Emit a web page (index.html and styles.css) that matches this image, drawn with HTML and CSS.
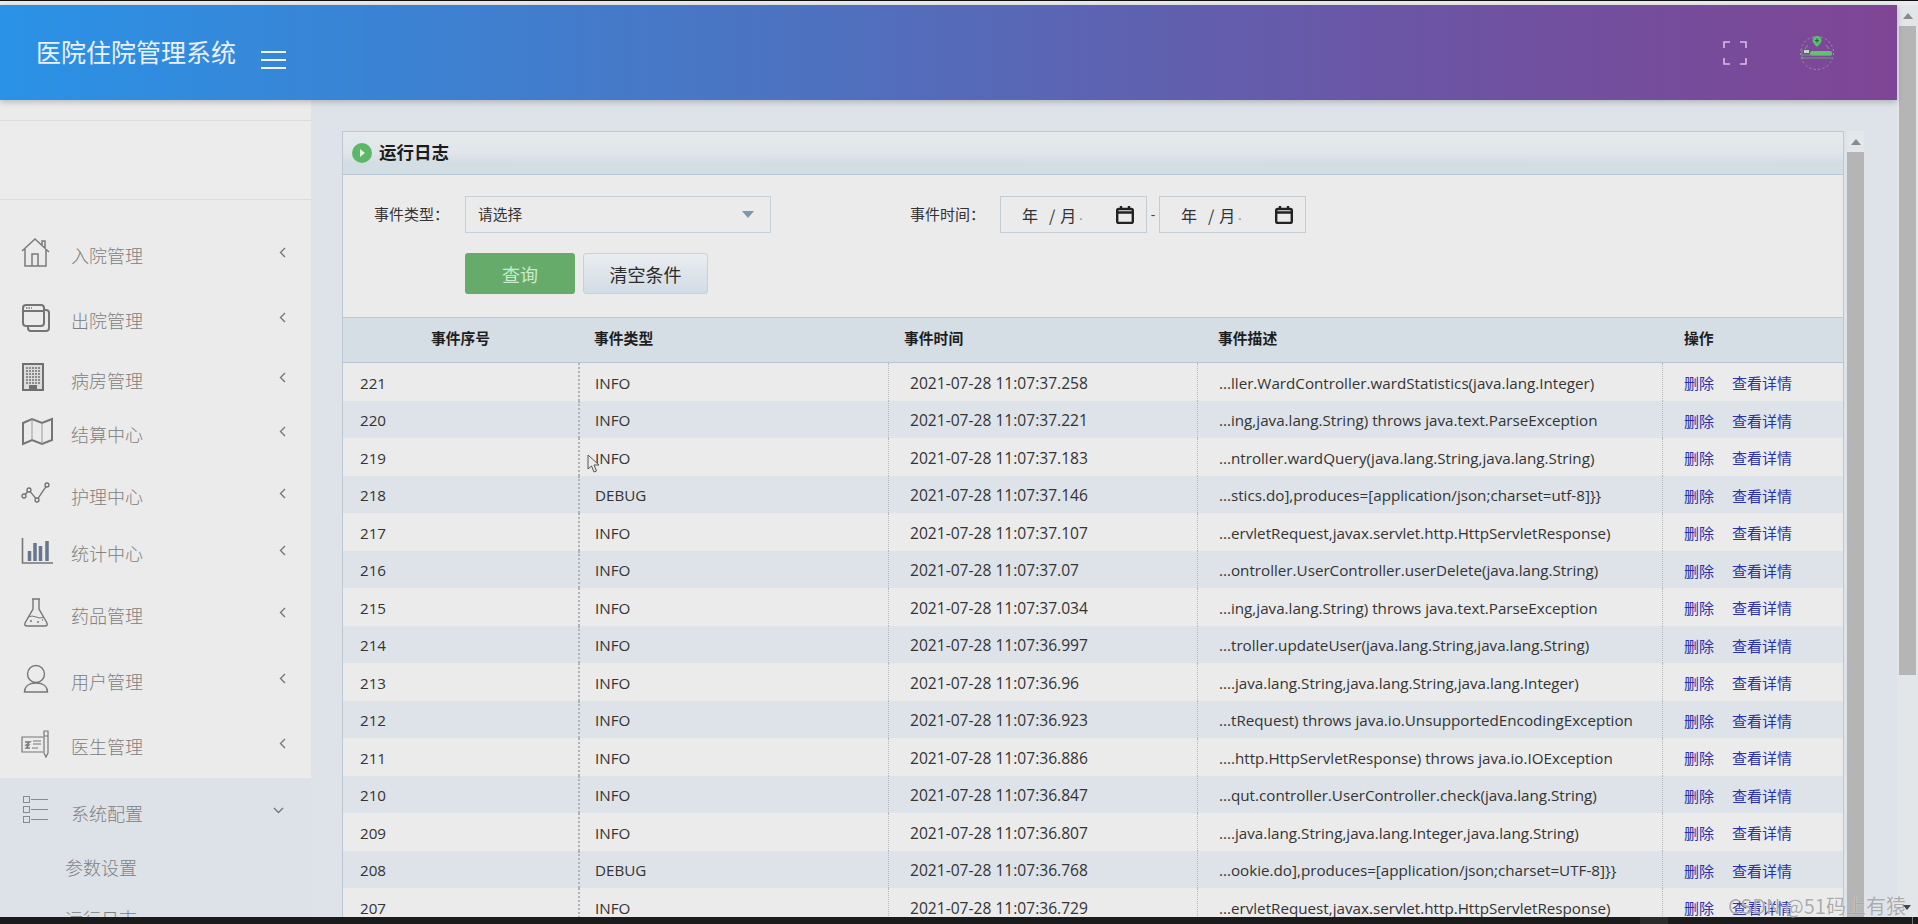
FILE: index.html
```html
<!DOCTYPE html>
<html lang="zh-CN">
<head>
<meta charset="utf-8">
<title>医院住院管理系统</title>
<link rel="stylesheet" href="styles.css">
</head>
<body>
<div class="app">
  <div class="top-strip"></div>
  <div class="window">
    <div class="page">
      <header class="header">
        <h1 class="brand">医院住院管理系统</h1>
        <div class="hamburger"><span></span><span></span><span></span></div>
        <div class="header-right">
          <svg class="fullscreen" width="24" height="24" viewBox="0 0 24 24" fill="none" stroke="#d2bfe6" stroke-width="1.600"><path d="M1 7V1h6M17 1h6v6M23 17v6h-6M7 23H1v-6"/></svg>
          <svg class="logo" width="36" height="38" viewBox="0 0 36 38" fill="none">
            <circle cx="18" cy="19" r="16.500" stroke="#9a9cb4" stroke-width=".9" stroke-dasharray="2 2.500"/>
            <path d="M18 2c-3 0-4.500 2-4.500 4.500C13.500 9 18 13 18 13s4.500-4 4.500-6.500C22.500 4 21 2 18 2z" fill="#58bd6c"/>
            <path d="M16 6.500h4M18 4.500v4" stroke="#27633a" stroke-width="1.200"/>
            <path d="M9 11q-2 2-3 4M27 11q2 2 3 4" stroke="#8fa79a" stroke-width=".8"/>
            <path d="M3 15v10M3 21h30M3 24h30" stroke="#6f9a86" stroke-width="1"/>
            <rect x="5" y="16" width="5" height="3" fill="#c6d6c8"/>
            <rect x="11" y="17" width="22" height="4.500" rx="2" fill="#63c070"/>
          </svg>
        </div>
      </header>
      <div class="main">
        <aside class="sidebar">
          <div class="side-top"></div>
          <nav class="side-nav">
            <div class="nav-item">
              <svg class="nav-icon" width="36" height="30" viewBox="0 0 36 30" fill="none" stroke="#7b7b7b" stroke-width="1.500"><path d="M4 14L17 2l14 13M24 8V4h3v8M7 12v17h21V12M14 29V17h6v12"/></svg>
              <span class="nav-text">入院管理</span>
              <svg class="chev" width="7" height="11" viewBox="0 0 7 11" fill="none" stroke="#777" stroke-width="1.400"><path d="M6 1L1.500 5.500 6 10"/></svg>
            </div>
            <div class="nav-item">
              <svg class="nav-icon" width="36" height="30" viewBox="0 0 36 30" fill="none" stroke="#757575" stroke-width="2"><rect x="5" y="3" width="21" height="21" rx="3"/><path d="M5 9h21M26 8h2a3 3 0 0 1 3 3v15a3 3 0 0 1-3 3H13a3 3 0 0 1-3-3v-2"/><path d="M8 6h6" stroke-width="1.500" stroke-dasharray="1.500 1"/></svg>
              <span class="nav-text">出院管理</span>
              <svg class="chev" width="7" height="11" viewBox="0 0 7 11" fill="none" stroke="#777" stroke-width="1.400"><path d="M6 1L1.500 5.500 6 10"/></svg>
            </div>
            <div class="nav-item">
              <svg class="nav-icon" width="36" height="30" viewBox="0 0 36 30" fill="none" stroke="#707070"><rect x="5" y="2" width="20" height="26" stroke-width="2" fill="#dcdcdc"/><path d="M8 6h14M8 9h14M8 12h14M8 15h14M8 18h14M8 21h14" stroke-width="1.600" stroke-dasharray="2 1"/><rect x="11" y="23" width="8" height="5" fill="#707070" stroke="none"/></svg>
              <span class="nav-text">病房管理</span>
              <svg class="chev" width="7" height="11" viewBox="0 0 7 11" fill="none" stroke="#777" stroke-width="1.400"><path d="M6 1L1.500 5.500 6 10"/></svg>
            </div>
            <div class="nav-item">
              <svg class="nav-icon" width="36" height="30" viewBox="0 0 36 30" fill="none" stroke="#757575" stroke-width="2"><path d="M5 7l9-4 10 4 10-4v21l-10 4-10-4-9 4z"/><path d="M14 3v21M24 7v21" stroke-width="1" stroke="#999"/></svg>
              <span class="nav-text">结算中心</span>
              <svg class="chev" width="7" height="11" viewBox="0 0 7 11" fill="none" stroke="#777" stroke-width="1.400"><path d="M6 1L1.500 5.500 6 10"/></svg>
            </div>
            <div class="nav-item">
              <svg class="nav-icon" width="36" height="30" viewBox="0 0 36 30" fill="none" stroke="#707070" stroke-width="1.300"><circle cx="6" cy="18" r="2"/><circle cx="11" cy="12" r="2"/><circle cx="19" cy="22" r="2"/><circle cx="29" cy="7" r="2"/><path d="M7.300 16.500l2.400-3M12.200 13.600l5.600 6.800M20 20.300L28 8.700"/></svg>
              <span class="nav-text">护理中心</span>
              <svg class="chev" width="7" height="11" viewBox="0 0 7 11" fill="none" stroke="#777" stroke-width="1.400"><path d="M6 1L1.500 5.500 6 10"/></svg>
            </div>
            <div class="nav-item">
              <svg class="nav-icon" width="36" height="30" viewBox="0 0 36 30" fill="none" stroke="#777" stroke-width="1.600"><path d="M4.500 3v25H35"/><path d="M11.500 16v10M17 8v18M22.500 11v15M29 6v20" stroke="#66768c" stroke-width="3.500"/></svg>
              <span class="nav-text">统计中心</span>
              <svg class="chev" width="7" height="11" viewBox="0 0 7 11" fill="none" stroke="#777" stroke-width="1.400"><path d="M6 1L1.500 5.500 6 10"/></svg>
            </div>
            <div class="nav-item">
              <svg class="nav-icon" width="36" height="30" viewBox="0 0 36 30" fill="none" stroke="#777" stroke-width="1.400"><path d="M14 2h8M15 2v10L7 26q-1 3 2 3h18q3 0 2-3L21 12V2"/><path d="M10 20q4-2 8 0t8 0" stroke-width="1"/><path d="M12 24h2M19 25h2M24 23h1" stroke-width="1.500"/></svg>
              <span class="nav-text">药品管理</span>
              <svg class="chev" width="7" height="11" viewBox="0 0 7 11" fill="none" stroke="#777" stroke-width="1.400"><path d="M6 1L1.500 5.500 6 10"/></svg>
            </div>
            <div class="nav-item">
              <svg class="nav-icon" width="36" height="30" viewBox="0 0 36 30" fill="none" stroke="#777" stroke-width="1.400"><circle cx="18" cy="11" r="8.500"/><path d="M6.500 29c0-6 5-9 11.500-9s11.500 3 11.500 9z"/></svg>
              <span class="nav-text">用户管理</span>
              <svg class="chev" width="7" height="11" viewBox="0 0 7 11" fill="none" stroke="#777" stroke-width="1.400"><path d="M6 1L1.500 5.500 6 10"/></svg>
            </div>
            <div class="nav-item">
              <svg class="nav-icon" width="36" height="30" viewBox="0 0 36 30" fill="none" stroke="#777" stroke-width="1.200"><path d="M25 9H4v15h21"/><path d="M15 13h8M15 16h8M14 20h6" stroke-width="1"/><path d="M7 14h5l-4 3h3l-3 3h4" stroke-width="1.300"/><path d="M26 3h4v22l-2 4-2-4zM26 8h4"/></svg>
              <span class="nav-text">医生管理</span>
              <svg class="chev" width="7" height="11" viewBox="0 0 7 11" fill="none" stroke="#777" stroke-width="1.400"><path d="M6 1L1.500 5.500 6 10"/></svg>
            </div>
            <div class="nav-group">
              <div class="nav-item">
                <svg class="nav-icon" width="36" height="30" viewBox="0 0 36 30" fill="none" stroke="#8a8a8a" stroke-width="1"><rect x="5.500" y="1.500" width="6" height="6"/><rect x="5.500" y="11.500" width="6" height="6"/><rect x="5.500" y="21.500" width="6" height="6"/><path d="M13 4.500h17M13 14.500h17M13 24.500h17"/></svg>
                <span class="nav-text">系统配置</span>
                <svg class="chev-open" width="11" height="7" viewBox="0 0 11 7" fill="none" stroke="#777" stroke-width="1.400"><path d="M1 1l4.500 4.500L10 1"/></svg>
              </div>
              <div class="sub-item">参数设置</div>
              <div class="sub-item">运行日志</div>
            </div>
          </nav>
        </aside>
        <main class="content">
          <section class="panel">
            <div class="panel-head">
              <svg class="panel-icon" width="20" height="20" viewBox="0 0 20 20"><circle cx="10" cy="10" r="10" fill="#5cb868"/><path d="M8 6l5 4-5 4z" fill="#e3f3e4"/></svg>
              <h2 class="panel-title">运行日志</h2>
            </div>
            <div class="form">
              <div class="form-row">
                <span class="label">事件类型：</span>
                <div class="select"><span>请选择</span><i class="caret"></i></div>
                <span class="label label-time">事件时间：</span>
                <div class="date">
                  <span class="date-year">年</span><span class="date-sep">/</span><span>月</span><span class="date-dot">.</span>
                  <svg class="cal" width="18" height="18" viewBox="0 0 18 18" fill="none" stroke="#222" stroke-width="2.400"><rect x="1.200" y="3" width="15.600" height="14" rx="1.500"/><path d="M1.200 6.500h15.600" stroke-width="2.500"/><path d="M5 0v3M13 0v3"/></svg>
                </div>
                <span class="date-dash">-</span>
                <div class="date">
                  <span class="date-year">年</span><span class="date-sep">/</span><span>月</span><span class="date-dot">.</span>
                  <svg class="cal" width="18" height="18" viewBox="0 0 18 18" fill="none" stroke="#222" stroke-width="2.400"><rect x="1.200" y="3" width="15.600" height="14" rx="1.500"/><path d="M1.200 6.500h15.600" stroke-width="2.500"/><path d="M5 0v3M13 0v3"/></svg>
                </div>
              </div>
              <div class="btn-row">
                <button class="btn btn-primary">查询</button>
                <button class="btn btn-clear">清空条件</button>
              </div>
            </div>
            <div class="log-table">
              <div class="log-row log-head">
                <div class="cell c-id">事件序号</div><div class="cell">事件类型</div><div class="cell">事件时间</div><div class="cell c-desc-h">事件描述</div><div class="cell c-op-h">操作</div>
              </div>
              <div class="log-row"><div class="cell">221</div><div class="cell">INFO</div><div class="cell">2021-07-28 11:07:37.258</div><div class="cell">...ller.WardController.wardStatistics(java.lang.Integer)</div><div class="cell"><a>删除</a><a>查看详情</a></div></div>
              <div class="log-row"><div class="cell">220</div><div class="cell">INFO</div><div class="cell">2021-07-28 11:07:37.221</div><div class="cell">...ing,java.lang.String) throws java.text.ParseException</div><div class="cell"><a>删除</a><a>查看详情</a></div></div>
              <div class="log-row"><div class="cell">219</div><div class="cell">INFO</div><div class="cell">2021-07-28 11:07:37.183</div><div class="cell">...ntroller.wardQuery(java.lang.String,java.lang.String)</div><div class="cell"><a>删除</a><a>查看详情</a></div></div>
              <div class="log-row"><div class="cell">218</div><div class="cell">DEBUG</div><div class="cell">2021-07-28 11:07:37.146</div><div class="cell">...stics.do],produces=[application/json;charset=utf-8]}}</div><div class="cell"><a>删除</a><a>查看详情</a></div></div>
              <div class="log-row"><div class="cell">217</div><div class="cell">INFO</div><div class="cell">2021-07-28 11:07:37.107</div><div class="cell">...ervletRequest,javax.servlet.http.HttpServletResponse)</div><div class="cell"><a>删除</a><a>查看详情</a></div></div>
              <div class="log-row"><div class="cell">216</div><div class="cell">INFO</div><div class="cell">2021-07-28 11:07:37.07</div><div class="cell">...ontroller.UserController.userDelete(java.lang.String)</div><div class="cell"><a>删除</a><a>查看详情</a></div></div>
              <div class="log-row"><div class="cell">215</div><div class="cell">INFO</div><div class="cell">2021-07-28 11:07:37.034</div><div class="cell">...ing,java.lang.String) throws java.text.ParseException</div><div class="cell"><a>删除</a><a>查看详情</a></div></div>
              <div class="log-row"><div class="cell">214</div><div class="cell">INFO</div><div class="cell">2021-07-28 11:07:36.997</div><div class="cell">...troller.updateUser(java.lang.String,java.lang.String)</div><div class="cell"><a>删除</a><a>查看详情</a></div></div>
              <div class="log-row"><div class="cell">213</div><div class="cell">INFO</div><div class="cell">2021-07-28 11:07:36.96</div><div class="cell">....java.lang.String,java.lang.String,java.lang.Integer)</div><div class="cell"><a>删除</a><a>查看详情</a></div></div>
              <div class="log-row"><div class="cell">212</div><div class="cell">INFO</div><div class="cell">2021-07-28 11:07:36.923</div><div class="cell">...tRequest) throws java.io.UnsupportedEncodingException</div><div class="cell"><a>删除</a><a>查看详情</a></div></div>
              <div class="log-row"><div class="cell">211</div><div class="cell">INFO</div><div class="cell">2021-07-28 11:07:36.886</div><div class="cell">....http.HttpServletResponse) throws java.io.IOException</div><div class="cell"><a>删除</a><a>查看详情</a></div></div>
              <div class="log-row"><div class="cell">210</div><div class="cell">INFO</div><div class="cell">2021-07-28 11:07:36.847</div><div class="cell">...qut.controller.UserController.check(java.lang.String)</div><div class="cell"><a>删除</a><a>查看详情</a></div></div>
              <div class="log-row"><div class="cell">209</div><div class="cell">INFO</div><div class="cell">2021-07-28 11:07:36.807</div><div class="cell">....java.lang.String,java.lang.Integer,java.lang.String)</div><div class="cell"><a>删除</a><a>查看详情</a></div></div>
              <div class="log-row"><div class="cell">208</div><div class="cell">DEBUG</div><div class="cell">2021-07-28 11:07:36.768</div><div class="cell">...ookie.do],produces=[application/json;charset=UTF-8]}}</div><div class="cell"><a>删除</a><a>查看详情</a></div></div>
              <div class="log-row"><div class="cell">207</div><div class="cell">INFO</div><div class="cell">2021-07-28 11:07:36.729</div><div class="cell">...ervletRequest,javax.servlet.http.HttpServletResponse)</div><div class="cell"><a>删除</a><a>查看详情</a></div></div>
            </div>
          </section>
          <div class="scroll scroll-inner"><i class="scroll-up"></i><div class="thumb thumb-inner"></div></div>
        </main>
      </div>
    </div>
    <div class="scroll scroll-outer"><i class="scroll-up"></i><div class="thumb thumb-outer"></div></div>
  </div>
  <div class="bottom-bar"><span class="bar-seg"></span><span class="bar-tick"></span></div>
</div>
<svg class="cursor" width="14" height="20" viewBox="0 0 14 20" fill="#ececec" stroke="#555" stroke-width="1"><path d="M1 1v14l3.500-3 2.500 6 2.500-1-2.500-6H12z"/></svg>
<div class="watermark">CSDN @51码上有猿</div>
<i class="wm-caret"></i>
</body>
</html>
```
FILE: styles.css
```css
* { box-sizing: border-box; }
html, body { margin: 0; padding: 0; height: 100%; overflow: hidden; }
body {
  font-family: "Open Sans", "Noto Sans CJK SC", sans-serif;
  color: #333;
  background: #e6e6e6;
}
.app { display: flex; flex-direction: column; width: 1918px; height: 924px; overflow: hidden; }
.top-strip { height: 5px; flex: none; background: #e9ebec; border-top: 1px solid #111; }
.window { display: flex; flex: 1; min-height: 0; }
.page { display: flex; flex-direction: column; width: 1897px; flex: none; min-height: 0; }

/* header */
.header {
  height: 95px; flex: none; display: flex; align-items: center;
  background: linear-gradient(90deg, #2a92e6 0%, #4b74c2 40%, #6a56a6 72%, #7f4595 100%);
  box-shadow: 0 2px 6px rgba(0, 0, 0, .22);
  position: relative; z-index: 2;
  padding-left: 36px; color: #e9f2fb;
}
.brand { margin: 0 0 2px; font: 400 25px/1 "Noto Sans CJK SC", sans-serif; white-space: nowrap; }
.hamburger { display: flex; flex-direction: column; gap: 6px; width: 25px; margin: 14px 0 0 25px; }
.hamburger span { display: block; height: 2px; background: #f0f5fb; }
.header-right { margin-left: auto; display: flex; align-items: center; padding-right: 62px; }
.fullscreen { margin-right: 52px; margin-top: 1px; }
.logo { margin-top: 1px; }

/* layout */
.main { display: flex; flex: 1; min-height: 0; overflow: hidden; }
.sidebar { width: 311px; flex: none; background: #ebebeb; overflow: hidden; }
.side-top { height: 80px; margin-top: 20px; border-top: 1px solid #dcdcdc; border-bottom: 1px solid #dcdcdc; background: #ececec; }
.side-nav { display: flex; flex-direction: column; padding-top: 27px; }
.nav-item { display: flex; align-items: center; height: 50px; flex: none; padding: 0 25px 0 18px; color: #7d7d7d; }
.nav-item:nth-child(2) { margin-top: 15px; }
.nav-item:nth-child(3) { margin-top: 10px; }
.nav-item:nth-child(4) { margin-top: 4px; }
.nav-item:nth-child(5) { margin-top: 12px; }
.nav-item:nth-child(6) { margin-top: 7px; }
.nav-item:nth-child(7) { margin-top: 12px; }
.nav-item:nth-child(8) { margin-top: 16px; }
.nav-item:nth-child(9) { margin-top: 15px; }
.nav-group { margin-top: 10px; background: #dde2e8; padding-top: 7px; }
.nav-group .nav-item { margin-top: 0; }
.nav-icon { flex: none; width: 36px; margin-right: 17px; }
.nav-text { font: 300 18px/1 "Noto Sans CJK SC", sans-serif; padding-top: 6px; color: #808080; }
.chev { margin-left: auto; }
.chev-open { margin-left: auto; margin-right: 2px; }
.sub-item { height: 50px; display: flex; align-items: center; padding-left: 65px; font: 300 18px/1 "Noto Sans CJK SC", sans-serif; color: #808080; }
.nav-item + .sub-item { margin-top: 7px; }
.sub-item + .sub-item { margin-top: 1px; }

/* content */
.content { flex: 1; min-width: 0; display: flex; align-items: flex-start; background: #dde3e8; padding: 31px 0 0 31px; overflow: hidden; }
.panel { width: 1502px; flex: none; background: #ebebeb; border: 1px solid #bcc8d4; border-bottom: 0; }
.panel-head {
  height: 43px; display: flex; align-items: center; gap: 8px; padding-left: 9px;
  background: linear-gradient(180deg, #e5e9ec 0%, #e1e6ea 45%, #d3dde4 75%, #d3dde4 100%);
  border-bottom: 1px solid #bcc8d8;
}
.panel-title { margin: 0 0 2px -1px; font: 700 17.500px/1 "Noto Sans CJK SC", sans-serif; color: #1c1c1c; }
.form { padding: 21px 0 23px; }
.form-row { display: flex; align-items: center; padding-left: 31px; height: 37px; }
.label { width: 90px; flex: none; font: 400 15px/1 "Noto Sans CJK SC", sans-serif; color: #333; margin-top: -2px; }
.form-row .label:first-child { width: 91px; }
.label-time { margin-left: 139px; }
.select {
  width: 306px; height: 37px; flex: none; display: flex; align-items: center; justify-content: space-between;
  padding: 0 16px 0 12px; border: 1px solid #c7d0d8; font: 400 14.700px/1 "Noto Sans CJK SC", sans-serif; color: #333;
}
.caret { width: 0; height: 0; border: 6.500px solid transparent; border-top: 7px solid #7f96ad; border-bottom: 0; }
.date {
  width: 147px; height: 37px; flex: none; display: flex; align-items: center;
  padding: 0 12px 0 21px; border: 1px solid #c4ccd3; font: 400 16px/1 "Noto Sans CJK SC", sans-serif; color: #333;
}
.date-year { margin-right: 11px; }
.date-sep { margin-right: 5px; }
.date-dot { margin-left: 3px; color: #888; font-size: 12px; }
.cal { margin-left: auto; }
.date-dash { width: 12px; text-align: center; flex: none; font-size: 14px; color: #444; }
.btn-row { display: flex; gap: 8px; margin: 20px 0 0 122px; }
.btn { height: 41px; border-radius: 3px; font: 400 18px/1 "Noto Sans CJK SC", sans-serif; padding: 0; }
.btn-primary { width: 110px; background: #67ab6b; border: 0; color: #c9ebcb; }
.btn-clear { width: 125px; background: linear-gradient(180deg, #e9edf0, #d2dce5); border: 1px solid #c6d1db; color: #2b2b2b; }

/* table */
.log-table { border-top: 1px solid #bcc8d4; }
.log-row { display: grid; grid-template-columns: 235px 310px 309px 465px 181px; height: 37.500px; align-items: stretch; font-size: 15.200px; }
.log-row:nth-child(odd) { background: #dde3e8; }
.log-row:not(.log-head) .cell { border-left: 1px dotted #b5b8bc; padding: 2px 0 0 21px; }
.log-row:not(.log-head) .cell:nth-child(1) { border-left: 0; padding-left: 17px; }
.log-row:not(.log-head) .cell:nth-child(2) { padding-left: 15px; border-left: 2px dotted #b0b3b7; }
.log-row:not(.log-head) .cell:nth-child(3) { font-size: 15.600px; }
.cell { display: flex; align-items: center; white-space: nowrap; overflow: hidden; color: #343434; }
.log-head { height: 45px; background: #d5dde5 !important; border-bottom: 1px solid #b8c4d0; font: 700 14.800px/1 "Noto Sans CJK SC", sans-serif; }
.log-head .cell { padding: 0 0 3px 16px; color: #1e1e1e; }
.log-head .c-id { justify-content: center; padding-left: 0; }
.log-head .c-desc-h { padding-left: 21px; }
.log-head .c-op-h { padding-left: 22px; }
.cell a { color: #2b31ab; font: 400 15px/1 "Noto Sans CJK SC", sans-serif; margin-right: 18px; }

/* scrollbars */
.scroll { flex: none; width: 17px; display: flex; flex-direction: column; align-items: center; }
.scroll-inner { margin: 0 0 0 3px; height: 790px; background: #e2e7ea; }
.scroll-outer { width: 21px; height: 100%; padding: 0 2px; background: #e3e6e9; }
.scroll-up { width: 0; height: 0; flex: none; margin: 8px 0 7px; border: 5px solid transparent; border-bottom: 6px solid #8a8a8a; border-top: 0; }
.thumb { width: 100%; background: #b5b5b5; }
.thumb-inner { flex: 1; }
.thumb-outer { height: 649px; }

/* bottom */
.bottom-bar { height: 7px; flex: none; background: #1b1b1b; display: flex; position: relative; z-index: 3; }
.bar-seg { width: 28px; margin-left: 1640px; background: #2b2b2b; }
.bar-tick { width: 1px; margin-left: 244px; background: #777; }

/* overlays */
.cursor { position: absolute; left: 587px; top: 454px; }
.watermark {
  position: absolute; left: 1728px; top: 892px; font: 400 20px/28px "Noto Sans CJK SC", sans-serif; white-space: nowrap;
  color: rgba(150, 150, 150, .8); text-shadow: 0 0 1px rgba(255, 255, 255, .9); z-index: 4;
}
.wm-caret { position: absolute; left: 1903px; top: 905px; width: 0; height: 0; border: 4.500px solid transparent; border-top: 5px solid #444; border-bottom: 0; z-index: 4; }
```
